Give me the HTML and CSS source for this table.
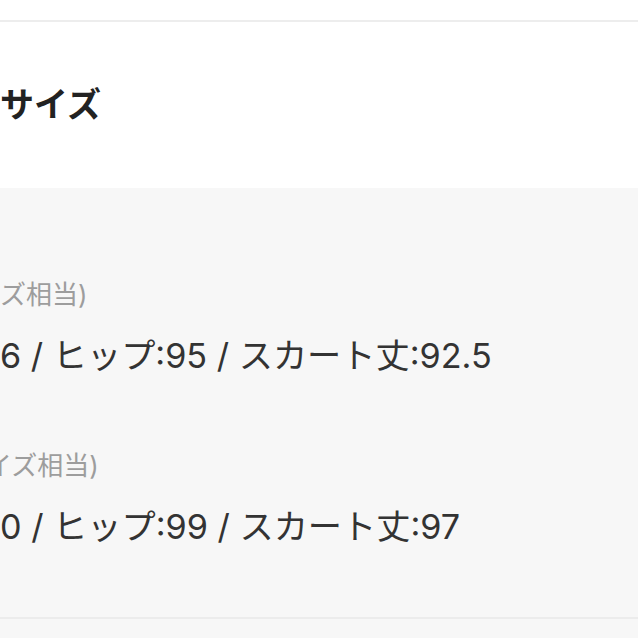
FILE: index.html
```html
<!DOCTYPE html>
<html lang="ja">
<head>
<meta charset="utf-8">
<link rel="stylesheet" href="styles.css">
</head>
<body>
<div class="page">
  <div class="topbar"></div>
  <section class="title">
    <h2 class="title-text">サイズ</h2>
  </section>
  <section class="sizes">
    <div class="size-item">
      <p class="size-label">ズ相当)</p>
      <p class="size-value">6 / ヒップ:95 / スカート丈:92.5</p>
    </div>
    <div class="size-item">
      <p class="size-label size-label-cut">イズ相当)</p>
      <p class="size-value">0 / ヒップ:99 / スカート丈:97</p>
    </div>
  </section>
  <div class="footer"></div>
</div>
</body>
</html>
```
FILE: styles.css
```css
html, body {
  margin: 0;
  padding: 0;
  background: #f7f7f7;
  overflow: hidden;
}
body {
  font-family: "Inter", "Noto Sans CJK JP", sans-serif;
  color: #333;
}
.page {
  display: flex;
  flex-direction: column;
}
.topbar {
  height: 20px;
  background: #fff;
  border-bottom: 2px solid #ededed;
}
.title {
  height: 166px;
  background: #fff;
  display: flex;
  align-items: center;
}
.title-text {
  margin: 0;
  font-size: 34px;
  line-height: 40px;
  font-weight: 700;
  color: #222;
}
.sizes {
  background: #f7f7f7;
  padding: 91px 0 68px 0;
  display: flex;
  flex-direction: column;
  gap: 72px;
  border-bottom: 2px solid #ececec;
}
.size-item {
  display: flex;
  flex-direction: column;
  gap: 23px;
}
.size-label {
  margin: 0;
  font-size: 26px;
  line-height: 32px;
  color: #9d9d9d;
  white-space: nowrap;
}
.size-label-cut {
  text-indent: -14px;
}
.size-value {
  margin: 0;
  font-size: 34.2px;
  line-height: 44px;
  color: #333;
  white-space: nowrap;
}
.footer {
  height: 40px;
  background: #f7f7f7;
}
```
